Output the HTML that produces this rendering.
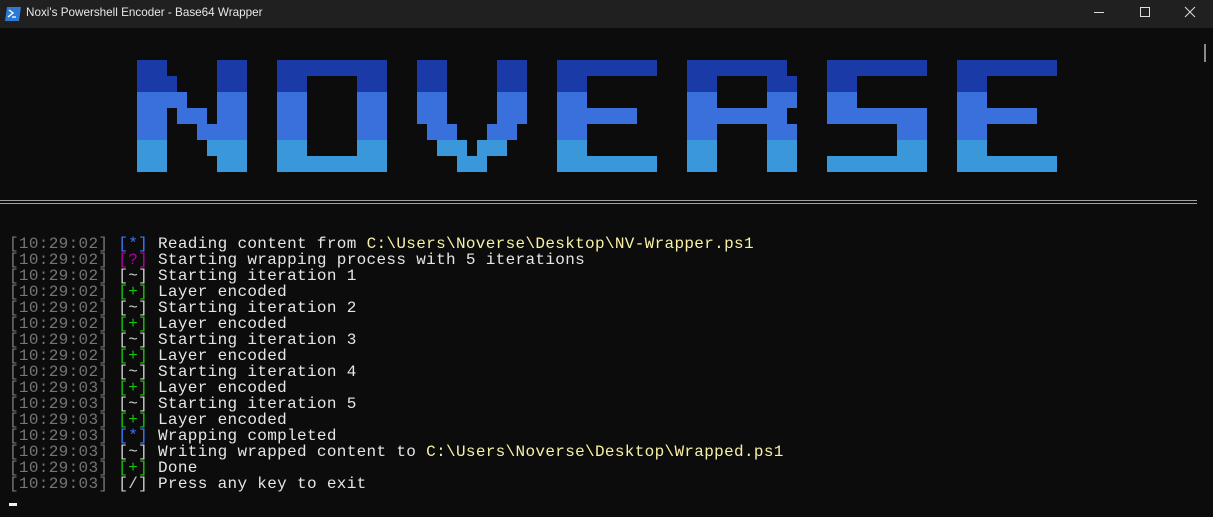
<!DOCTYPE html>
<html><head><meta charset="utf-8"><style>
html,body{margin:0;padding:0;width:1213px;height:517px;overflow:hidden;background:#0c0c0c;}
.title{position:absolute;left:0;top:0;width:1213px;height:28px;background:#202020;}
.title .t{position:absolute;left:26px;top:6px;font:11.7px "Liberation Sans",sans-serif;color:#e8e8e8;}
.term{position:absolute;left:9px;top:236px;font:16px/16px "Liberation Mono",monospace;letter-spacing:0.33px;color:#e6e6e6;white-space:pre;}
.g{color:#767676}.b{color:#3b78ff}.m{color:#b4009e}.w{color:#cccccc}.gr{color:#16c60c}.y{color:#f9f1a5}
</style></head><body>
<div class="title">
<svg style="position:absolute;left:5px;top:7px" width="16" height="14" viewBox="0 0 16 14"><path d="M2 0H16L14 14H0Z" fill="#2b7bd6"/><path d="M4 3L8 6L3 10" stroke="#fff" stroke-width="1.4" fill="none"/><path d="M7 10H11" stroke="#fff" stroke-width="1.3"/></svg>
<div class="t">Noxi's Powershell Encoder - Base64 Wrapper</div>
<svg style="position:absolute;left:1090px;top:4px" width="120" height="18"><path d="M4 8.5H14" stroke="#ddd" stroke-width="1"/><rect x="50.5" y="3.5" width="9" height="9" fill="none" stroke="#ddd"/><path d="M95 3L105 13M105 3L95 13" stroke="#ddd"/></svg>
</div>
<div style="position:absolute;left:1204px;top:44px;width:2px;height:18px;background:#8a8a8a"></div>
<svg style="position:absolute;left:0;top:0" width="1213" height="517">
<defs><linearGradient id="lg" gradientUnits="userSpaceOnUse" x1="0" y1="60" x2="0" y2="172">
<stop offset="0" stop-color="#1a3aa8"/><stop offset="0.2857" stop-color="#1a3aa8"/>
<stop offset="0.2857" stop-color="#3a70dc"/><stop offset="0.7143" stop-color="#3a70dc"/>
<stop offset="0.7143" stop-color="#3a98da"/><stop offset="1" stop-color="#3a98da"/></linearGradient></defs>
<g fill="url(#lg)">
<rect x="137" y="60" width="30" height="112"/><rect x="217" y="60" width="30" height="112"/>
<rect x="167" y="76" width="10" height="16"/><rect x="167" y="92" width="20" height="16"/><rect x="177" y="108" width="30" height="16"/><rect x="197" y="124" width="20" height="16"/><rect x="207" y="140" width="10" height="16"/>
<rect x="277" y="60" width="110" height="16"/><rect x="277" y="60" width="30" height="112"/><rect x="357" y="60" width="30" height="112"/><rect x="277" y="156" width="110" height="16"/>
<rect x="417" y="60" width="30" height="64"/><rect x="497" y="60" width="30" height="64"/><rect x="427" y="124" width="30" height="16"/><rect x="487" y="124" width="30" height="16"/><rect x="437" y="140" width="30" height="16"/><rect x="477" y="140" width="30" height="16"/><rect x="457" y="156" width="30" height="16"/>
<rect x="557" y="60" width="100" height="16"/><rect x="557" y="60" width="30" height="112"/><rect x="557" y="108" width="80" height="16"/><rect x="557" y="156" width="100" height="16"/>
<rect x="687" y="60" width="100" height="16"/><rect x="687" y="60" width="30" height="112"/><rect x="767" y="76" width="30" height="32"/><rect x="687" y="108" width="100" height="16"/><rect x="767" y="124" width="30" height="48"/>
<rect x="827" y="60" width="100" height="16"/><rect x="827" y="60" width="30" height="64"/><rect x="827" y="108" width="100" height="16"/><rect x="897" y="108" width="30" height="64"/><rect x="827" y="156" width="100" height="16"/>
<rect x="957" y="60" width="100" height="16"/><rect x="957" y="60" width="30" height="112"/><rect x="957" y="108" width="80" height="16"/><rect x="957" y="156" width="100" height="16"/>
</g>
<rect x="0" y="200" width="1197" height="1" fill="#a0a0a0"/><rect x="0" y="203" width="1197" height="1" fill="#a0a0a0"/>
<rect x="9" y="503" width="8" height="3" fill="#f0f0f0"/>
</svg>
<div class="term"><span class="g">[10:29:02]</span> <span class="b">[*]</span> Reading content from <span class="y">C:\Users\Noverse\Desktop\NV-Wrapper.ps1</span>
<span class="g">[10:29:02]</span> <span class="m">[?]</span> Starting wrapping process with 5 iterations
<span class="g">[10:29:02]</span> <span class="w">[~]</span> Starting iteration 1
<span class="g">[10:29:02]</span> <span class="gr">[+]</span> Layer encoded
<span class="g">[10:29:02]</span> <span class="w">[~]</span> Starting iteration 2
<span class="g">[10:29:02]</span> <span class="gr">[+]</span> Layer encoded
<span class="g">[10:29:02]</span> <span class="w">[~]</span> Starting iteration 3
<span class="g">[10:29:02]</span> <span class="gr">[+]</span> Layer encoded
<span class="g">[10:29:02]</span> <span class="w">[~]</span> Starting iteration 4
<span class="g">[10:29:03]</span> <span class="gr">[+]</span> Layer encoded
<span class="g">[10:29:03]</span> <span class="w">[~]</span> Starting iteration 5
<span class="g">[10:29:03]</span> <span class="gr">[+]</span> Layer encoded
<span class="g">[10:29:03]</span> <span class="b">[*]</span> Wrapping completed
<span class="g">[10:29:03]</span> <span class="w">[~]</span> Writing wrapped content to <span class="y">C:\Users\Noverse\Desktop\Wrapped.ps1</span>
<span class="g">[10:29:03]</span> <span class="gr">[+]</span> Done
<span class="g">[10:29:03]</span> <span class="w">[/]</span> Press any key to exit</div>
</body></html>
